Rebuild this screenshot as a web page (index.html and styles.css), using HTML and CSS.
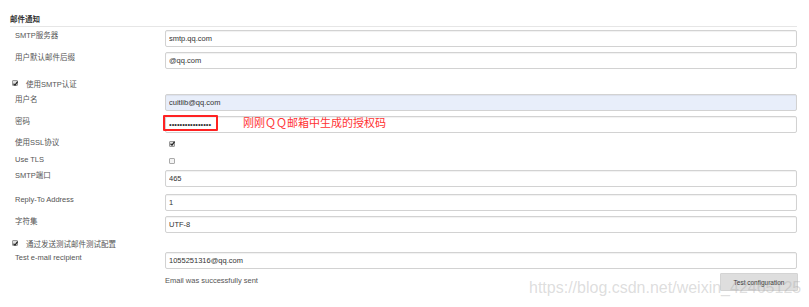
FILE: index.html
```html
<!DOCTYPE html>
<html lang="zh-CN">
  <head>
    <meta charset="UTF-8" />
    <title>邮件通知</title>
    <link rel="stylesheet" href="styles.css">
  </head>
  <body>
    <div class="section">
      <div class="section-title">邮件通知</div>

      <div class="row first">
        <div class="label">SMTP服务器</div>
        <input class="field" type="text" value="smtp.qq.com" />
      </div>
      <div class="row">
        <div class="label">用户默认邮件后缀</div>
        <input class="field" type="text" value="@qq.com" />
      </div>

      <div class="check-row gap">
        <span class="box checked"><svg viewBox="0 0 7 7"><path d="M1.5 3.8 L3 5.2 L5.6 1.6" /></svg></span>
        <span>使用SMTP认证</span>
      </div>
      <div class="row">
        <div class="label">用户名</div>
        <input class="field filled" type="text" value="cuitlib@qq.com" />
      </div>
      <div class="row">
        <div class="label">密码</div>
        <div class="pw-wrap">
          <input class="field" type="password" value="xxxxxxxxxxxxxxxx" />
          <span class="mark"></span>
          <span class="note">刚刚ＱＱ邮箱中生成的授权码</span>
        </div>
      </div>
      <div class="row small">
        <div class="label">使用SSL协议</div>
        <div><span class="box checked"><svg viewBox="0 0 7 7"><path d="M1.5 3.8 L3 5.2 L5.6 1.6" /></svg></span></div>
      </div>
      <div class="row small">
        <div class="label">Use TLS</div>
        <div><span class="box"></span></div>
      </div>
      <div class="row tight">
        <div class="label">SMTP端口</div>
        <input class="field" type="text" value="465" />
      </div>
      <div class="row wide">
        <div class="label">Reply-To Address</div>
        <input class="field" type="text" value="1" />
      </div>
      <div class="row">
        <div class="label">字符集</div>
        <input class="field" type="text" value="UTF-8" />
      </div>

      <div class="check-row tight">
        <span class="box checked"><svg viewBox="0 0 7 7"><path d="M1.5 3.8 L3 5.2 L5.6 1.6" /></svg></span>
        <span>通过发送测试邮件测试配置</span>
      </div>
      <div class="row first">
        <div class="label">Test e-mail recipient</div>
        <input class="field" type="text" value="1055251316@qq.com" />
      </div>
      <div class="result-row">
        <div></div>
        <div class="result">
          <span>Email was successfully sent</span>
          <button class="btn-test">Test configuration</button>
        </div>
      </div>
    </div>

    <div class="watermark">https://blog.csdn.net/weixin_42465125</div>
  </body>
</html>
```

FILE: styles.css
```css
body {
  margin: 0;
  font-family: "Liberation Sans", "Noto Sans CJK SC", sans-serif;
  font-size: 7.5px;
  color: #444;
  background: #fff;
  height: 307px;
  overflow: hidden;
  position: relative;
}
.section {
  margin: 0 12px 0 10px;
}
.section-title {
  margin-top: 14px;
  line-height: 12px;
  font-weight: bold;
  color: #333;
  border-bottom: 1px solid #e6e6e6;
}
.row, .result-row {
  display: grid;
  grid-template-columns: 155px 1fr;
  margin-top: 5px;
}
.row.first {
  margin-top: 3px;
}
.row.small {
  margin-top: 4px;
  height: 12px;
  align-items: center;
}
.row.small + .row.small {
  margin-top: 5px;
}
.row.tight {
  margin-top: 4px;
}
.row.wide {
  margin-top: 7px;
}
.label {
  padding-left: 5px;
  line-height: 11px;
  color: #555;
}
.row.small .label {
  line-height: 12px;
}
.field {
  box-sizing: border-box;
  width: 100%;
  height: 17px;
  margin: 0;
  padding: 0 3px;
  border: 1px solid #d2d2d2;
  border-radius: 2px;
  box-shadow: inset 0 1px 1px rgba(0, 0, 0, 0.06);
  font-family: inherit;
  font-size: 7.5px;
  color: #333;
  background: #fff;
}
.field.filled {
  background: #e8eefa;
}
.pw-wrap {
  position: relative;
}
.mark {
  position: absolute;
  left: -2px;
  top: -1px;
  width: 51px;
  height: 12px;
  border: 2px solid #f22;
  border-radius: 1px;
}
.note {
  position: absolute;
  left: 78px;
  top: 1px;
  font-size: 11px;
  line-height: 13px;
  color: #f33;
  white-space: nowrap;
}
.check-row {
  display: flex;
  align-items: center;
  gap: 8px;
  height: 12px;
  padding-left: 2px;
  color: #555;
}
.check-row.gap {
  margin-top: 8px;
}
.check-row.tight {
  margin-top: 4px;
}
.row.small .box {
  margin-left: 4px;
}
.box {
  display: inline-block;
  box-sizing: border-box;
  width: 6px;
  height: 6px;
  border: 1px solid #aaa;
  border-radius: 1px;
  background: #f4f4f4;
  vertical-align: middle;
}
.box.checked {
  background: #ddd;
  border-color: #999;
}
.box svg {
  display: block;
  width: 7px;
  height: 7px;
  margin: -1.5px 0 0 -1px;
}
.box path {
  fill: none;
  stroke: #222;
  stroke-width: 1.2;
}
.result-row {
  margin-top: 4px;
}
.result {
  display: flex;
  justify-content: space-between;
  align-items: flex-start;
  color: #555;
}
.result span {
  line-height: 16px;
}
.btn-test {
  width: 78px;
  height: 18px;
  margin: 0 -1px 0 0;
  padding: 0;
  border: 1px solid #d4d4d4;
  border-radius: 1px;
  background: #dedede;
  font-family: inherit;
  font-size: 6.5px;
  color: #333;
}
.watermark {
  position: absolute;
  left: 529px;
  top: 279px;
  font-size: 16px;
  line-height: 18px;
  color: rgba(170, 170, 170, 0.4);
  white-space: nowrap;
}
```
